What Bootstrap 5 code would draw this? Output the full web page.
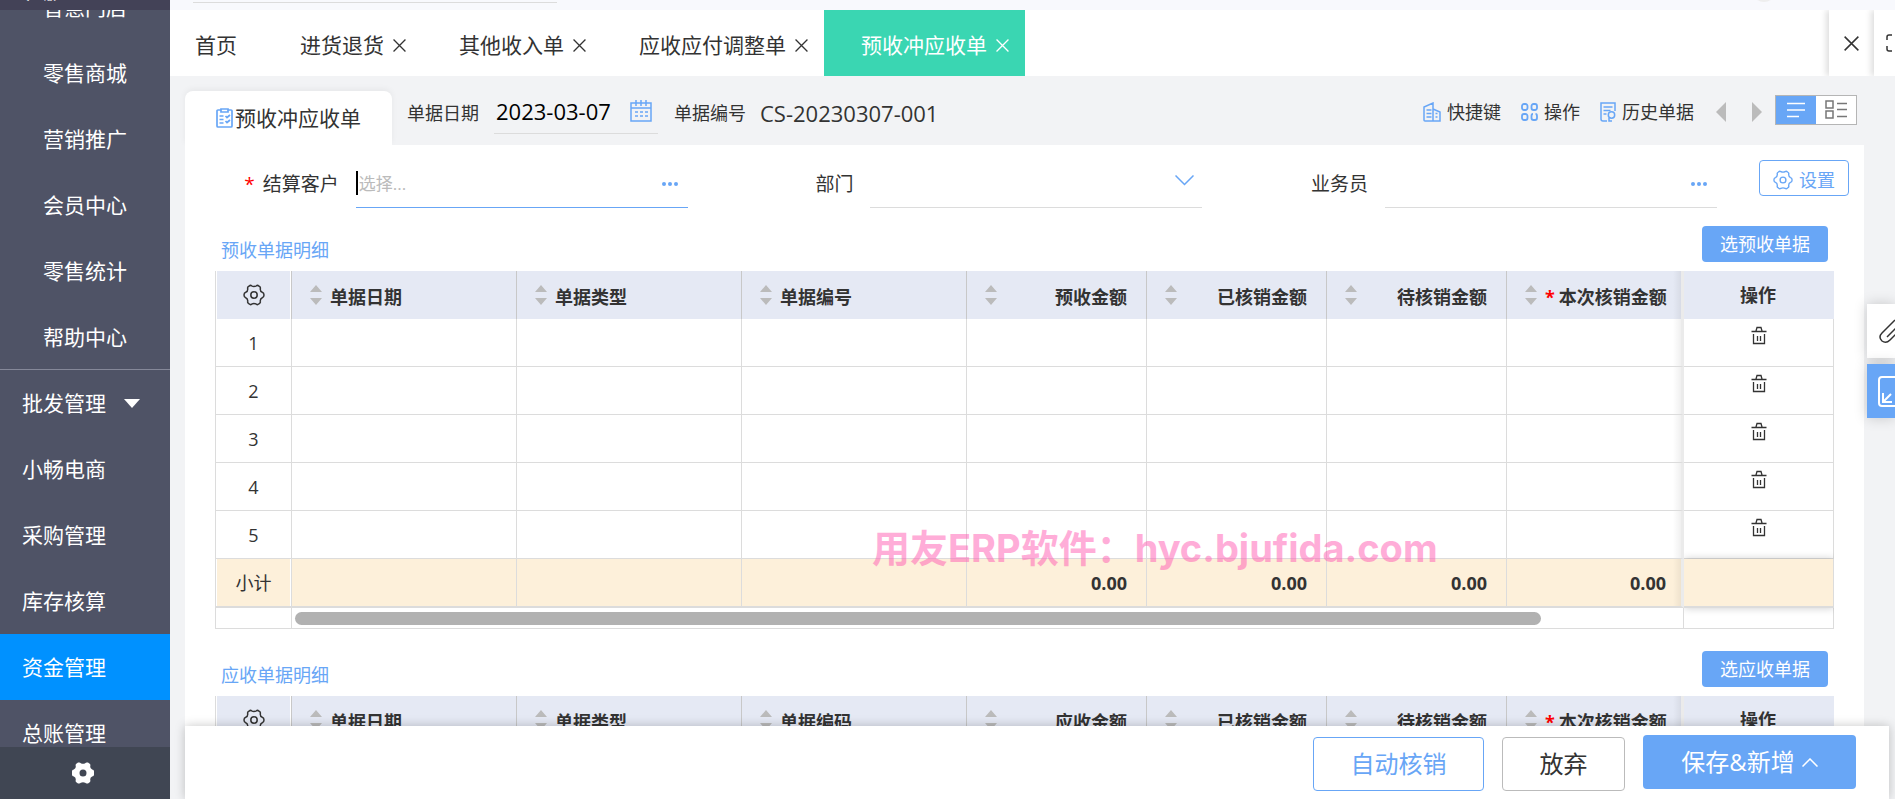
<!DOCTYPE html>
<html lang="zh-CN">
<head>
<meta charset="utf-8">
<meta name="viewport" content="width=device-width, initial-scale=1">
<title>预收冲应收单</title>
<link href="https://cdn.jsdelivr.net/npm/bootstrap@5.3.0/dist/css/bootstrap.min.css" rel="stylesheet">
<style>
:root{--blue:#68a6f6;--line:#dcdcdc;--ink:#333}
body{font-family:"Open Sans","Noto Sans CJK SC",sans-serif;font-size:18px;line-height:24px;color:var(--ink);background:#f2f3f5}
svg{display:block;flex:none;fill:none;stroke:currentColor}
a{color:inherit;text-decoration:none}
.blue{color:var(--blue)}
.fs-tab{font-size:21px;line-height:30px}
/* sidebar */
.side{width:170px;background:#4f5366;color:#fff}
.side-brand{height:10px;background:#434257;font-size:12px;line-height:16px;padding-left:20px;align-items:flex-end}
.side-brand span{margin-bottom:6px}
.side-menu{margin-top:-36px}
.side-menu a{height:66px;padding-left:22px;font-size:21px;flex:none}
.side-menu a.sub{padding-left:43px}
.side-menu a.split{border-bottom:1px solid #858899}
.side-menu a.current{background:#0091ff}
.tri-down{border:8px solid transparent;border-top:9px solid #fff;border-bottom:0;margin-left:18px}
.side-foot{height:52px;background:#404653}
.side-foot button{color:#fff}
/* top */
.topstrip{height:10px;background:#f8f9fd;padding:2px 0 0 23px}
.topstrip i{display:block;width:364px;height:1px;background:#dcdcdc}
.tabs{height:66px;background:#fff}
.tabs .tab{padding:4px 16px 0 37px;gap:9px}
.tabs .tab.home{padding:4px 26px 0 25px}
.tabs .tab.on{background:#3ad6b2;color:#fff}
.tabs button,.plain{border:0;background:none;padding:0;color:inherit}
.tabs .winbox{background:#fff;box-shadow:-3px 0 6px rgba(0,0,0,.13);clip-path:inset(0 0 0 -10px)}
.winbox.w1{width:45px}.tabs .winbox.w2{width:21px;padding-left:12px;overflow:hidden}
/* heading of the document */
.dochead{height:69px;margin:0 31px 0 15px}
.doctab{width:207px;height:54px;margin-top:15px;border-radius:8px 8px 0 0;background:#fff;box-shadow:0 -2px 6px rgba(0,0,0,.05);gap:2px}
.docinfo{padding:5px 0 0 15px}
.datebox{width:164px;border-bottom:1px solid var(--line);height:42px;margin:0 16px 0 15px}
.datebox input{width:128px;border:0;background:none;font-size:22px;line-height:30px;color:#000;padding:0 0 4px 2px}
.docno{font-size:22px;margin-left:14px}
.tools{padding:2px 7px 0 0}
.tool{gap:6px}
.pg{border:10px solid transparent;width:0;height:0;border-left-width:0;border-right:10px solid #bbb}
.pg.next{border-right-width:0;border-left:10px solid #bbb}
.pager{gap:26px;margin:0 13px 0 22px}
.viewsw{border:1px solid #b5b5b5;height:30px;width:82px}
.viewsw button{width:50%;color:#777;background:#fff}
.viewsw .on{background:var(--blue);color:#fff}
.panel{margin:0 31px 0 15px;background:#fff}
/* filters */
.filters{padding:15px 15px 0 0;margin-left:-12px}
.field{flex:1 1 0;min-width:0}
.field label{padding-right:17px;font-size:19px}
.field .box{flex:0 0 64.5%;height:48px;border-bottom:1px solid var(--line)}
.field .box.focus{border-color:var(--blue)}
.field .box input,.field .box select{width:100%;height:46px;border:0;background:none;appearance:none;outline:0;padding:0 40px 0 3px;font-size:17px;color:var(--ink)}
.field ::placeholder{color:#bbb}
.field .mark-r{position:absolute;right:10px;top:50%;transform:translateY(-50%)}
.field .mark-v{position:absolute;right:8px;top:15px;pointer-events:none}
.cursor{position:absolute;left:0;top:11px;width:2px;height:24px;background:#000}
.req{color:#f00}
.set-wrap{padding-left:42px}
.btn{--bs-btn-padding-y:0;--bs-btn-font-size:18px;--bs-btn-border-radius:4px}
.btn-act{background:var(--blue);color:#fff;height:36px;width:126px;line-height:24px}
.btn-line{border:1px solid var(--blue);color:var(--blue);background:#fff}
.set{width:90px;height:36px;gap:6px;padding:4px 0 0}
/* tables */
.sect{padding:0 36px}
.sect-head{height:45px}
.sect-1{margin-top:18px}.sect-2{margin-top:22px}
.sheet{margin:0 30px}
.grid-t{width:100%;table-layout:fixed;border-collapse:separate;border-spacing:0}
.grid-t th,.grid-t td{height:48px;padding:0 19px;border-right:1px solid var(--line);border-bottom:1px solid var(--line);vertical-align:middle}
.grid-t th{background-color:#e5e9f4;border-right-color:#c8c8c8;border-bottom:0;font-weight:700;line-height:24px;padding-left:18px}
.grid-t tr>:first-child{border-left:1px solid var(--line);text-align:center;padding:0;box-shadow:inset 1px 0 #fff,inset -1px 0 #fff}
.grid-t tr>:nth-child(8){border-right:3px solid #ebebeb;padding-right:15px;background-image:linear-gradient(to left,rgba(0,0,0,.06),transparent 8px)}
.grid-t tr>:last-child{text-align:center}
.grid-t th:last-child{border-right-color:#e5e9f4}
.grid-t td:last-child{padding-bottom:10px}
.grid-t tfoot td{background-color:#fdf0da;border-bottom:2px solid var(--line);height:49px;padding-bottom:0;text-align:right;font-weight:700}
.grid-t tfoot td:first-child{font-weight:400}
.grid-t tfoot td:last-child{box-shadow:0 0 8px rgba(0,0,0,.2);clip-path:inset(-8px 0)}
.hd{gap:8px}
.barrow{border:1px solid var(--line);border-top:0;height:21px}
.barrow .c0{width:76px;border-right:1px solid var(--line)}
.barrow .c2{width:150px;border-left:1px solid var(--line)}
.barrow .track{padding:4px 142px 0 3px}
.thumb{height:13px;border-radius:7px;background:#b1b1b1}
/* footer */
.foot{position:absolute;left:15px;right:6px;bottom:0;height:73px;background:#fff;box-shadow:0 0 10px rgba(0,0,0,.22);padding:9px 33px 0 0;gap:18px}
.foot .btn{height:54px;font-size:24px;line-height:36px}
.b1{width:171px;margin-top:2px}.b2{width:123px;margin-top:2px;border:1px solid #bbb;background:#fff;color:var(--ink)}
.b3{width:213px;background:var(--blue);color:#fff;gap:7px}
/* overlays */
.dock{position:absolute;right:0;top:304px;width:28px;gap:6px}
.dock button{height:54px;width:28px;background:#fff;box-shadow:0 0 14px rgba(0,0,0,.18);overflow:hidden}
.dock button.on{background:var(--blue);color:#fff}
.dot{position:absolute;right:119px;top:-22px;width:24px;height:24px;border-radius:50%;background:#eee}
.wm{position:absolute;left:702px;top:524px;font-size:38px;line-height:48px;font-weight:700;color:#ff5db3;opacity:.5;white-space:nowrap;pointer-events:none;font-family:"Inter","Noto Sans CJK SC",sans-serif}
</style>
</head>
<body class="d-flex vh-100 overflow-hidden">
<svg width="0" height="0" class="position-absolute" aria-hidden="true">
  <symbol id="x" viewBox="0 0 12 12"><path stroke-width="1.200" d="M.5.5l11 11M11.500.5l-11 11"/></symbol>
  <symbol id="gear" viewBox="0 0 22 22"><path stroke-linejoin="round" d="M6 2.200Q7.500.8 8.600 1.800q2.400 1.200 4.800 0Q14.500.8 16 2.200q1.800 1 1.300 2.400-.3 2.800 2 3.700Q21 8.800 21 11t-1.700 2.700q-2.300.9-2 3.700.5 1.400-1.300 2.400-1.500 1.400-2.600.4-2.400-1.200-4.800 0-1.100 1-2.600-.4-1.800-1-1.300-2.400.3-2.800-2-3.700Q1 13.200 1 11t1.700-2.700q2.300-.9 2-3.700Q4.200 3.200 6 2.200z"/><circle cx="11" cy="11" r="3.200"/></symbol>
  <symbol id="sort" viewBox="0 0 12 20"><path d="M6 0l6 7H0zM6 20l6-7H0z" fill="#bbb" stroke="none"/></symbol>
  <symbol id="bin" viewBox="0 0 16 19"><path d="M.5 5.500h15M5 5l1-3.500h4L11 5M2.500 8v9.500h11V8M6.500 10v5M9.500 10v5"/></symbol>
  <symbol id="dots" viewBox="0 0 16 4"><g fill="currentColor" stroke="none"><circle cx="2" cy="2" r="2"/><circle cx="8" cy="2" r="2"/><circle cx="14" cy="2" r="2"/></g></symbol>
</svg>

<aside class="side d-flex flex-column flex-shrink-0">
  <div class="side-brand d-flex flex-shrink-0 overflow-hidden"><span>专业版</span></div>
  <div class="flex-fill overflow-hidden">
    <nav class="side-menu d-flex flex-column">
      <a href="#" class="sub d-flex align-items-center">智慧门店</a>
      <a href="#" class="sub d-flex align-items-center">零售商城</a>
      <a href="#" class="sub d-flex align-items-center">营销推广</a>
      <a href="#" class="sub d-flex align-items-center">会员中心</a>
      <a href="#" class="sub d-flex align-items-center">零售统计</a>
      <a href="#" class="sub split d-flex align-items-center">帮助中心</a>
      <a href="#" class="d-flex align-items-center">批发管理<span class="tri-down"></span></a>
      <a href="#" class="d-flex align-items-center">小畅电商</a>
      <a href="#" class="d-flex align-items-center">采购管理</a>
      <a href="#" class="d-flex align-items-center">库存核算</a>
      <a href="#" class="current d-flex align-items-center">资金管理</a>
      <a href="#" class="d-flex align-items-center">总账管理</a>
    </nav>
  </div>
  <div class="side-foot d-flex flex-shrink-0 align-items-center justify-content-center pe-1">
    <button type="button" class="plain" aria-label="设置"><svg width="22" height="22" viewBox="0 0 22 22"><path fill="currentColor" stroke="none" fill-rule="evenodd" d="M6 .6Q8 0 8.800 1.200q2.200 1.100 4.400 0Q14 0 16 .6l2 1.300q.8 1 .2 2.400-.2 2.400 1.900 3.200 1.900.1 1.900 1.700v3.600q0 1.600-1.900 1.700-2.100.8-1.900 3.200.6 1.400-.2 2.400l-2 1.300q-2 .6-2.800-.6-2.200-1.100-4.400 0-.8 1.200-2.800.6l-2-1.300q-.8-1-.2-2.400.2-2.400-1.900-3.200Q0 14.400 0 12.800V9.200q0-1.600 1.900-1.700 2.100-.8 1.900-3.200Q3.200 2.900 4 1.900zM11 7.500a3.500 3.500 0 100 7 3.500 3.500 0 000-7z"/></svg></button>
  </div>
</aside>

<main class="flex-fill d-flex flex-column position-relative overflow-hidden">
  <div class="topstrip flex-shrink-0"><i></i></div>
  <span class="dot"></span>
  <nav class="tabs fs-tab d-flex flex-shrink-0">
    <a href="#" class="tab home d-flex align-items-center">首页</a>
    <div class="tab d-flex align-items-center"><a href="#">进货退货</a><button type="button" aria-label="关闭"><svg width="13" height="13"><use href="#x"/></svg></button></div>
    <div class="tab d-flex align-items-center"><a href="#">其他收入单</a><button type="button" aria-label="关闭"><svg width="13" height="13"><use href="#x"/></svg></button></div>
    <div class="tab d-flex align-items-center"><a href="#">应收应付调整单</a><button type="button" aria-label="关闭"><svg width="13" height="13"><use href="#x"/></svg></button></div>
    <div class="tab on d-flex align-items-center"><a href="#">预收冲应收单</a><button type="button" aria-label="关闭"><svg width="13" height="13"><use href="#x"/></svg></button></div>
    <button type="button" class="winbox w1 ms-auto d-flex align-items-center justify-content-center" aria-label="关闭全部"><svg width="15" height="15"><use href="#x"/></svg></button>
    <button type="button" class="winbox w2 d-flex align-items-center" aria-label="全屏"><svg width="18" height="18" viewBox="0 0 18 18" stroke-width="1.500"><path d="M6 1H3Q1 1 1 3v3M1 12v3q0 2 2 2h3M12 1h3q2 0 2 2v3M17 12v3q0 2-2 2h-3"/></svg></button>
  </nav>

  <header class="dochead d-flex flex-shrink-0">
    <div class="doctab fs-tab d-flex align-items-center justify-content-center">
      <svg class="blue" width="17" height="20" viewBox="0 0 17 20" stroke-width="1.700"><path d="M5 2H2q-1 0-1 1v15q0 1 1 1h13q1 0 1-1V3q0-1-1-1h-3M5 1h7v3H5zM3.500 8h4M3.500 11.500h4M3.500 15h4M9.500 8l1.500 1.500L14 7M9.500 13l1.500 1.500 3-2.500"/></svg>预收冲应收单</div>
    <div class="docinfo d-flex align-items-center">
      <label for="d">单据日期</label>
      <div class="datebox d-flex align-items-center"><input id="d" type="text" value="2023-03-07">
        <svg class="blue ms-2 mb-1" width="22" height="22" viewBox="0 0 22 22" stroke-width="1.500"><path d="M1 3h20v18H1zM1 8h20M6 0v6M11 0v6M16 0v6M5 12h3M10 12h3M15 12h3M5 16h3M10 16h3M15 16h3"/></svg></div>
      <span>单据编号</span><span class="docno">CS-20230307-001</span>
    </div>
    <div class="tools ms-auto d-flex align-items-center">
      <a href="#" class="tool d-flex align-items-center me-3"><svg class="blue" width="18" height="20" viewBox="0 0 18 20" stroke-width="1.500"><path d="M1 18.500V5L10 1v18H2q-1 0-1-1zM10 7l7 3v9h-7M3.500 8h5M3.500 11.500h5M3.500 15h5M12.500 11.500h2M12.500 15h2" /></svg>快捷键</a>
      <a href="#" class="tool d-flex align-items-center me-3"><svg class="blue ms-1" width="17" height="18" viewBox="0 0 17 18" stroke-width="1.800"><rect x="1" y="1" width="5.500" height="6" rx="2"/><rect x="10.500" y="1" width="5.500" height="6" rx="2"/><rect x="1" y="11" width="5.500" height="6" rx="2"/><path d="M12 11q-1.500 0-1.500 2v2q0 2 2 2h1.500q2 0 2-2v-2q0-2-1.500-2"/></svg>操作</a>
      <a href="#" class="tool d-flex align-items-center"><svg class="blue ms-1" width="16" height="20" viewBox="0 0 16 20" stroke-width="1.500"><path d="M7 19H3q-2 0-2-2V1h14v8M3.500 5h9M3.500 8.500h7M3.500 12h3"/><circle cx="11.500" cy="13" r="3.200"/><path d="M9 16v3h3"/></svg>历史单据</a>
      <div class="pager d-flex">
        <button type="button" class="plain" aria-label="上一张"><span class="pg d-block"></span></button>
        <button type="button" class="plain" aria-label="下一张"><span class="pg next d-block"></span></button>
      </div>
      <div class="viewsw d-flex mb-1">
        <button type="button" class="border-0 p-0 on d-flex align-items-center justify-content-center" aria-label="列表"><svg width="18" height="16" viewBox="0 0 18 16" stroke-width="1.500"><path d="M0 1.500h18M0 8h18M0 14.500h12"/></svg></button>
        <button type="button" class="border-0 p-0 d-flex align-items-center justify-content-center" aria-label="明细"><svg width="22" height="19" viewBox="0 0 22 19" stroke-width="1.500"><path d="M1 1h7v7H1zM1 11h7v7H1zM12 3.500h10M12 9.500h10M12 16.500h10"/></svg></button>
      </div>
    </div>
  </header>

  <section class="panel flex-fill">
    <form class="filters d-flex">
      <div class="field d-flex align-items-center justify-content-end">
        <label for="f1"><span class="req me-2">*</span>结算客户</label>
        <div class="box focus position-relative"><input id="f1" type="text" placeholder="选择..."><span class="cursor"></span><svg class="mark-r blue" width="16" height="4"><use href="#dots"/></svg></div>
      </div>
      <div class="field d-flex align-items-center justify-content-end">
        <label for="f2">部门</label>
        <div class="box position-relative"><select id="f2"><option></option></select><svg class="mark-v blue" width="19" height="11" viewBox="0 0 19 11" stroke-width="1.500"><path d="M.5.5l9 9 9-9"/></svg></div>
      </div>
      <div class="field d-flex align-items-center justify-content-end">
        <label for="f3">业务员</label>
        <div class="box position-relative"><input id="f3" type="text"><svg class="mark-r blue" width="16" height="4"><use href="#dots"/></svg></div>
      </div>
      <div class="set-wrap"><button type="button" class="btn btn-line set d-flex align-items-center justify-content-center"><svg width="20" height="20" stroke-width="1.500"><use href="#gear" width="20" height="20"/></svg>设置</button></div>
    </form>

    <div class="sect sect-1"><div class="sect-head d-flex justify-content-between"><span class="blue pt-2 mt-1">预收单据明细</span><button type="button" class="btn btn-act">选预收单据</button></div></div>
    <div class="sheet">
      <table class="grid-t">
        <colgroup><col width="77"><col width="225"><col width="225"><col width="225"><col width="180"><col width="180"><col width="180"><col width="177"><col width="150"></colgroup>
        <thead><tr>
          <th><svg class="mx-auto" width="22" height="22" stroke-width="1.500"><use href="#gear"/></svg></th>
          <th><div class="hd d-flex align-items-center"><svg width="12" height="20"><use href="#sort"/></svg><span class="pt-1">单据日期</span></div></th>
          <th><div class="hd d-flex align-items-center"><svg width="12" height="20"><use href="#sort"/></svg><span class="pt-1">单据类型</span></div></th>
          <th><div class="hd d-flex align-items-center"><svg width="12" height="20"><use href="#sort"/></svg><span class="pt-1">单据编号</span></div></th>
          <th><div class="hd d-flex align-items-center"><svg width="12" height="20"><use href="#sort"/></svg><span class="pt-1 ms-auto">预收金额</span></div></th>
          <th><div class="hd d-flex align-items-center"><svg width="12" height="20"><use href="#sort"/></svg><span class="pt-1 ms-auto">已核销金额</span></div></th>
          <th><div class="hd d-flex align-items-center"><svg width="12" height="20"><use href="#sort"/></svg><span class="pt-1 ms-auto">待核销金额</span></div></th>
          <th><div class="hd d-flex align-items-center"><svg width="12" height="20"><use href="#sort"/></svg><span class="pt-1 ms-auto text-nowrap"><span class="req me-1">*</span>本次核销金额</span></div></th>
          <th>操作</th>
        </tr></thead>
        <tbody>
          <tr><td>1</td><td></td><td></td><td></td><td></td><td></td><td></td><td></td><td><button type="button" class="plain" aria-label="删除"><svg width="16" height="19" stroke-width="1.300"><use href="#bin"/></svg></button></td></tr>
          <tr><td>2</td><td></td><td></td><td></td><td></td><td></td><td></td><td></td><td><button type="button" class="plain" aria-label="删除"><svg width="16" height="19" stroke-width="1.300"><use href="#bin"/></svg></button></td></tr>
          <tr><td>3</td><td></td><td></td><td></td><td></td><td></td><td></td><td></td><td><button type="button" class="plain" aria-label="删除"><svg width="16" height="19" stroke-width="1.300"><use href="#bin"/></svg></button></td></tr>
          <tr><td>4</td><td></td><td></td><td></td><td></td><td></td><td></td><td></td><td><button type="button" class="plain" aria-label="删除"><svg width="16" height="19" stroke-width="1.300"><use href="#bin"/></svg></button></td></tr>
          <tr><td>5</td><td></td><td></td><td></td><td></td><td></td><td></td><td></td><td><button type="button" class="plain" aria-label="删除"><svg width="16" height="19" stroke-width="1.300"><use href="#bin"/></svg></button></td></tr>
        </tbody>
        <tfoot><tr><td>小计</td><td></td><td></td><td></td><td>0.00</td><td>0.00</td><td>0.00</td><td>0.00</td><td></td></tr></tfoot>
      </table>
      <div class="barrow d-flex"><div class="c0"></div><div class="track flex-fill"><div class="thumb"></div></div><div class="c2"></div></div>
    </div>

    <div class="sect sect-2"><div class="sect-head d-flex justify-content-between"><span class="blue pt-2 mt-1">应收单据明细</span><button type="button" class="btn btn-act">选应收单据</button></div></div>
    <div class="sheet">
      <table class="grid-t">
        <colgroup><col width="77"><col width="225"><col width="225"><col width="225"><col width="180"><col width="180"><col width="180"><col width="177"><col width="150"></colgroup>
        <thead><tr>
          <th><svg class="mx-auto" width="22" height="22" stroke-width="1.500"><use href="#gear"/></svg></th>
          <th><div class="hd d-flex align-items-center"><svg width="12" height="20"><use href="#sort"/></svg><span class="pt-1">单据日期</span></div></th>
          <th><div class="hd d-flex align-items-center"><svg width="12" height="20"><use href="#sort"/></svg><span class="pt-1">单据类型</span></div></th>
          <th><div class="hd d-flex align-items-center"><svg width="12" height="20"><use href="#sort"/></svg><span class="pt-1">单据编码</span></div></th>
          <th><div class="hd d-flex align-items-center"><svg width="12" height="20"><use href="#sort"/></svg><span class="pt-1 ms-auto">应收金额</span></div></th>
          <th><div class="hd d-flex align-items-center"><svg width="12" height="20"><use href="#sort"/></svg><span class="pt-1 ms-auto">已核销金额</span></div></th>
          <th><div class="hd d-flex align-items-center"><svg width="12" height="20"><use href="#sort"/></svg><span class="pt-1 ms-auto">待核销金额</span></div></th>
          <th><div class="hd d-flex align-items-center"><svg width="12" height="20"><use href="#sort"/></svg><span class="pt-1 ms-auto text-nowrap"><span class="req me-1">*</span>本次核销金额</span></div></th>
          <th>操作</th>
        </tr></thead>
      </table>
    </div>
  </section>

  <div class="wm">用友ERP软件：hyc.bjufida.com</div>

  <footer class="foot d-flex justify-content-end align-items-start">
    <button type="button" class="btn btn-line b1">自动核销</button>
    <button type="button" class="btn b2">放弃</button>
    <button type="button" class="btn b3 d-flex align-items-center justify-content-center">保存&amp;新增<svg width="16" height="9" viewBox="0 0 16 9" stroke-width="1.500"><path d="M.5 8.500L8 1l7.500 7.500"/></svg></button>
  </footer>

  <div class="dock d-flex flex-column">
    <button type="button" class="plain bg-white" aria-label="附件"><svg style="margin-left:12px" width="30" height="26" viewBox="0 0 30 26" stroke-width="1.500"><path d="M8 19L20 7q2-2 3.500-.5T23 10L11 22q-4 4-8 1-4-4 0-8L16 2"/></svg></button>
    <button type="button" class="plain on" aria-label="收起"><svg style="margin-left:11px" width="31" height="31" viewBox="0 0 31 31" stroke-width="2"><rect x="1" y="1" width="29" height="29" rx="3"/><path d="M13 18l-8 8M5 17v9h9M18 13l8-8"/></svg></button>
  </div>
</main>
<script src="https://cdn.jsdelivr.net/npm/bootstrap@5.3.0/dist/js/bootstrap.bundle.min.js"></script>
</body>
</html>
